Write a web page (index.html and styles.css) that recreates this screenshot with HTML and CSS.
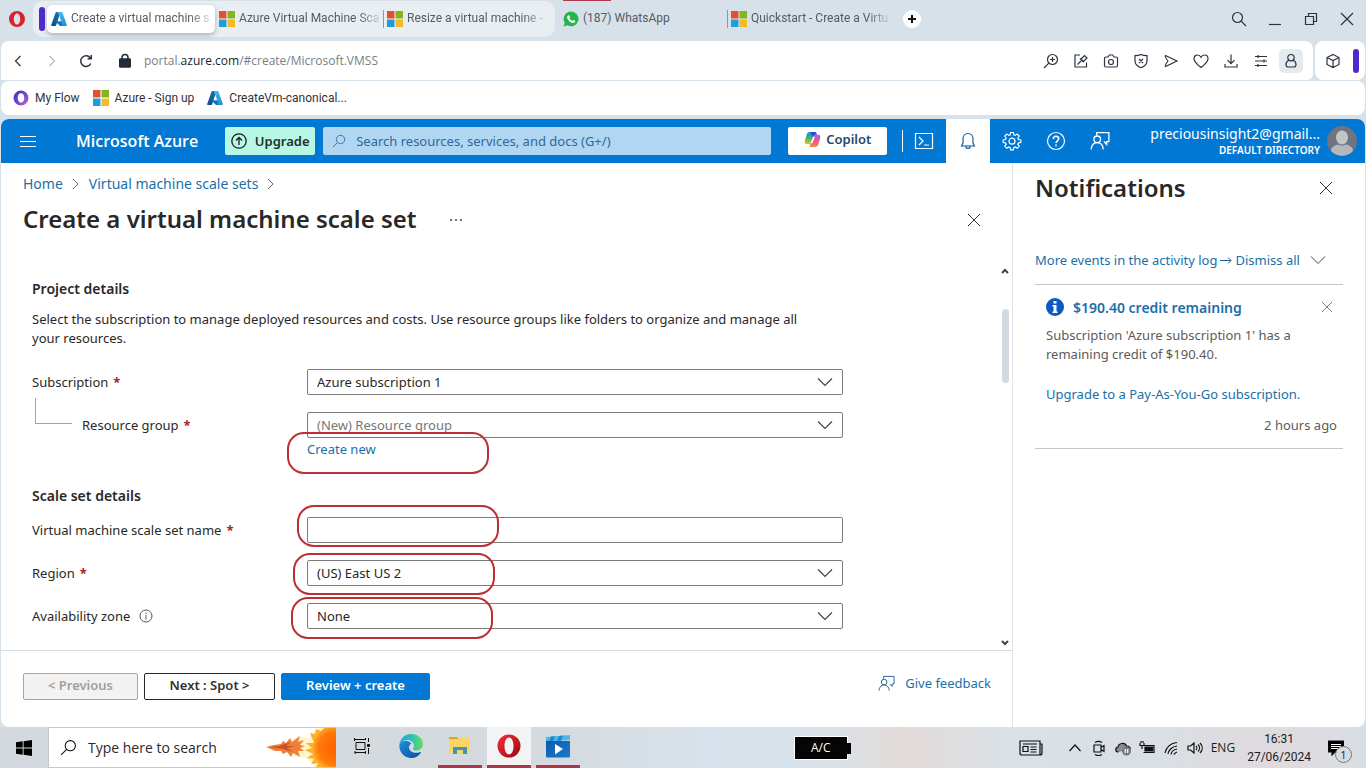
FILE: index.html
```
<!DOCTYPE html>
<html lang="en">
<head>
    <meta charset="UTF-8">
    <meta name="viewport" content="width=device-width, initial-scale=1.0">
    <title>Create a virtual machine scale set - Microsoft Azure</title>
    <link rel="stylesheet" href="styles.css">
</head>
<body>
    <!-- shared icons -->
    <svg class="sprite" width="0" height="0" aria-hidden="true">
        <defs>
            <linearGradient id="azLeft" x1="0" y1="0" x2="0" y2="1"><stop offset="0" stop-color="#1a6fb5"/><stop offset="1" stop-color="#0b4f8f"/></linearGradient>
            <linearGradient id="azRight" x1="0" y1="0" x2="1" y2="1"><stop offset="0" stop-color="#4fc3ee"/><stop offset="1" stop-color="#1e88d2"/></linearGradient>
            <linearGradient id="flow" x1="0" y1="0" x2="1" y2="1"><stop offset="0" stop-color="#3a2bc0"/><stop offset="0.6" stop-color="#7b4bd0"/><stop offset="1" stop-color="#e06ab8"/></linearGradient>
            <linearGradient id="operaRed" x1="0" y1="0" x2="1" y2="1"><stop offset="0" stop-color="#f0303c"/><stop offset="0.6" stop-color="#c81420"/><stop offset="1" stop-color="#8c0a14"/></linearGradient>
            <linearGradient id="edgeTop" x1="0" y1="0" x2="1" y2="0"><stop offset="0" stop-color="#1fa2e0"/><stop offset="0.5" stop-color="#2bbfc0"/><stop offset="1" stop-color="#6bdc5a"/></linearGradient>
            <linearGradient id="edgeLow" x1="0" y1="0" x2="1" y2="1"><stop offset="0" stop-color="#1b8fdc"/><stop offset="1" stop-color="#0c4f9c"/></linearGradient>
            <linearGradient id="cpA" x1="0" y1="0" x2="0" y2="1"><stop offset="0" stop-color="#1d86e8"/><stop offset="0.5" stop-color="#3fb86b"/><stop offset="1" stop-color="#f0c419"/></linearGradient>
            <linearGradient id="cpB" x1="0" y1="0" x2="0" y2="1"><stop offset="0" stop-color="#b05be8"/><stop offset="0.5" stop-color="#e8559a"/><stop offset="1" stop-color="#f58a3c"/></linearGradient>
            <linearGradient id="film" x1="0" y1="0" x2="1" y2="1"><stop offset="0" stop-color="#0d5aa8"/><stop offset="1" stop-color="#1a7ad0"/></linearGradient>
            <radialGradient id="sun"><stop offset="0" stop-color="#ff5f00"/><stop offset="0.75" stop-color="#ff7a08"/><stop offset="1" stop-color="#ffa526"/></radialGradient>
        </defs>
        <symbol id="ms" viewBox="0 0 15 15">
            <path fill="#e2512c" d="M0 0h7v7H0z"/><path fill="#86b41c" d="M8 0h7v7H8z"/>
            <path fill="#1f9ddb" d="M0 8h7v7H0z"/><path fill="#f2b928" d="M8 8h7v7H8z"/>
        </symbol>
        <symbol id="azure" viewBox="0 0 16 16">
            <path fill="url(#azLeft)" d="M5.3 1h4.2L5.2 14.2c-.1.5-.5.8-1 .8H.9c-.5 0-.9-.6-.7-1.1L4.5 1.7c.1-.4.4-.7.8-.7z"/>
            <path fill="#1573bd" d="M11.5 10.2H5.6l-.4 1L9 14.9c.2.1.4.1.6.1h3.3z"/>
            <path fill="url(#azRight)" d="M11.5 1.7c-.1-.4-.5-.7-1-.7H6.2c.5 0 .9.3 1 .7l4.2 12.2c.2.5-.2 1.1-.8 1.1H15c.5 0 .9-.6.8-1.1z"/>
        </symbol>
        <symbol id="chevron-down" viewBox="0 0 16 16"><path d="M1 4.5l7 7 7-7"/></symbol>
        <symbol id="chevron-right" viewBox="0 0 8 14"><path d="M1 2l5 5-5 5"/></symbol>
        <symbol id="close" viewBox="0 0 14 14"><path d="M1 1l12 12M13 1L1 13"/></symbol>
        <symbol id="search" viewBox="0 0 16 16"><circle cx="9.7" cy="6.3" r="4.8"/><path d="M6.3 9.7L1 15"/></symbol>
        <symbol id="feedback" viewBox="0 0 18 18">
            <path d="M6 4V1.500h11v8h-2v2.500l-2.500-2.500"/><circle cx="6.500" cy="7.500" r="3"/><path d="M1 16.500c.4-3.600 2.500-6 5.500-6s5.100 2.400 5.500 6"/>
        </symbol>
    </svg>

    <header class="tabstrip">
        <svg class="opera" viewBox="0 0 18 18"><path fill="#dc2032" fill-rule="evenodd" d="M9 1a8 8 0 100 16A8 8 0 009 1zm0 2.500c1.900 0 3.200 2.400 3.200 5.500S10.900 14.500 9 14.500 5.800 12.100 5.800 9 7.100 3.500 9 3.500z"/></svg>
        <div class="tab-group">
            <span class="island"></span>
            <a class="tab active" href="#"><svg class="fav"><use href="#azure"/></svg><span>Create a virtual machine s</span></a>
            <a class="tab" href="#"><svg class="fav"><use href="#ms"/></svg><span>Azure Virtual Machine Sca</span></a>
            <a class="tab split" href="#"><svg class="fav"><use href="#ms"/></svg><span>Resize a virtual machine -</span></a>
        </div>
        <a class="tab whatsapp" href="#">
            <svg class="fav" viewBox="0 0 15 15"><path fill="#25b548" d="M7.600.5a6.900 6.900 0 11-3.400 12.900L.5 14.500l1.100-3.600A6.900 6.900 0 017.600.5z"/><path fill="#fff" d="M5.300 4c.4 0 .6 0 .8.500l.5 1.200c.1.400-.6.900-.6 1.200.6 1.200 1.500 1.900 2.700 2.400.4 0 .8-1 1.100-.9l1.600.8c.3.300-.2 1.800-1.700 2C7.200 11.200 4 8.200 3.900 6 3.900 4.900 4.600 4 5.300 4z"/></svg>
            <span>(187) WhatsApp</span>
        </a>
        <a class="tab split" href="#"><svg class="fav"><use href="#ms"/></svg><span>Quickstart - Create a Virtu</span></a>
        <button class="new-tab" aria-label="New tab"><svg viewBox="0 0 18 18"><path d="M9 5v8M5 9h8"/></svg></button>
        <div class="window-buttons">
            <button aria-label="Search tabs"><svg viewBox="0 0 16 16"><circle cx="6.500" cy="6.500" r="5"/><path d="M10.200 10.200L15 15"/></svg></button>
            <button aria-label="Minimize"><svg viewBox="0 0 16 16"><path d="M2 13.500h12"/></svg></button>
            <button aria-label="Restore"><svg viewBox="0 0 16 16"><path d="M2.500 5.500h8v8h-8zM5.500 5.500v-3h8v8h-3"/></svg></button>
            <button aria-label="Close"><svg viewBox="0 0 16 16"><path d="M2 2l12 12M14 2L2 14"/></svg></button>
        </div>
    </header>

    <div class="toolbar">
        <div class="address">
            <button aria-label="Back"><svg viewBox="0 0 16 16"><path d="M10.500 3L5.500 8l5 5"/></svg></button>
            <button class="off" aria-label="Forward"><svg viewBox="0 0 16 16"><path d="M5.500 3l5 5-5 5"/></svg></button>
            <button aria-label="Reload"><svg class="reload" viewBox="0 0 16 16"><path d="M12.800 10.500a5.300 5.300 0 11-.3-5.300M13.300 2v3.700H9.600"/></svg></button>
            <svg class="lock" viewBox="0 0 12 16"><path fill="#222c38" d="M1.500 6h9c.6 0 1 .4 1 1v6c0 .6-.4 1-1 1h-9c-.6 0-1-.4-1-1V7c0-.6.400-1 1-1z"/><path d="M3 6V4.500a3 3 0 016 0V6"/></svg>
            <span class="url">portal.<b>azure.com</b>/#create/Microsoft.VMSS</span>
            <div class="tools">
                <button aria-label="Zoom"><svg viewBox="0 0 16 16"><circle cx="9.500" cy="6.500" r="5"/><path d="M5.800 10.200L1 15M9.500 4v5M7 6.500h5"/></svg></button>
                <button aria-label="Pin"><svg viewBox="0 0 16 16"><path d="M7 2H2v12h11.500V9.500M4.500 11.500l3.500-3.500M7 5.500L10.500 9M8 6l3.500-3.500 2.500 2.500-3.500 3.500z"/></svg></button>
                <button aria-label="Snapshot"><svg viewBox="0 0 16 16"><path d="M3 4h2l1.300-2h3.400L11 4h2c.9 0 1.500.6 1.500 1.500v7c0 .9-.6 1.500-1.500 1.500H3c-.9 0-1.500-.6-1.500-1.500v-7C1.500 4.600 2.100 4 3 4z"/><circle cx="8" cy="9" r="2.500"/></svg></button>
                <button aria-label="Ad blocker"><svg viewBox="0 0 16 16"><path d="M8 1.500c2 1 4 1.200 6 1.200v5c0 3.500-2.500 5.800-6 7-3.500-1.200-6-3.500-6-7v-5c2 0 4-.2 6-1.200zM6 6l4 4M10 6l-4 4"/></svg></button>
                <button aria-label="Send"><svg viewBox="0 0 16 16"><path d="M2.500 2.500L14 8 2.500 13.500c-.7-.8.9-3.500 2.500-5.500-1.600-2-3.200-4.700-2.500-5.500z"/></svg></button>
                <button aria-label="Bookmark"><svg viewBox="0 0 16 16"><path d="M8 14.500C3.500 11 1 8.700 1 5.700 1 3.500 2.600 2 4.500 2 6 2 7.300 2.900 8 4.300 8.700 2.900 10 2 11.500 2 13.400 2 15 3.500 15 5.700c0 3-2.500 5.300-7 8.800z"/></svg></button>
                <button aria-label="Downloads"><svg viewBox="0 0 16 16"><path d="M8 1.500v9M4.500 7.200L8 10.700l3.500-3.500M2 11v3h12v-3"/></svg></button>
                <button aria-label="Easy setup"><svg viewBox="0 0 16 16"><path d="M2 3.500h12M2 8h12M2 12.500h12M5 2v3M11 6.500v3M5 11v3"/></svg></button>
                <button class="user" aria-label="Profile"><svg viewBox="0 0 16 16"><circle cx="8" cy="4.700" r="3.200"/><path d="M5.800 7.200C4 8 3 9.500 3 11.500c0 1.700.8 2.500 2 2.500h6c1.200 0 2-.8 2-2.500 0-2-1-3.500-2.800-4.300"/></svg></button>
            </div>
        </div>
        <div class="side-tools">
            <button aria-label="Extensions"><svg viewBox="0 0 16 16"><path d="M8 1.500l6 3v7l-6 3-6-3v-7zM2 4.500l6 3 6-3M8 7.500v7"/></svg></button>
            <span class="island"></span>
        </div>
    </div>

    <nav class="bookmarks">
        <a href="#"><svg class="fav" viewBox="0 0 16 16"><path fill="url(#flow)" fill-rule="evenodd" d="M8 .5a7.500 7.500 0 100 15 7.500 7.500 0 000-15zm0 2.800c2 0 3.300 2 3.300 4.700S10 12.700 8 12.700 4.700 10.700 4.700 8 6 3.300 8 3.300z"/></svg>My Flow</a>
        <a href="#"><svg class="fav"><use href="#ms"/></svg>Azure - Sign up</a>
        <a href="#"><svg class="fav"><use href="#azure"/></svg>CreateVm-canonical...</a>
    </nav>

    <div class="portal">
        <header class="topbar">
            <button class="menu" aria-label="Menu"><svg viewBox="0 0 16 16"><path d="M0 3.500h16M0 8.500h16M0 13.500h16"/></svg></button>
            <a class="brand" href="#">Microsoft Azure</a>
            <button class="upgrade"><svg viewBox="0 0 16 16"><circle cx="8" cy="8" r="7.200"/><path d="M8 12V4.500M5 7.500l3-3 3 3"/></svg>Upgrade</button>
            <div class="search"><svg><use href="#search"/></svg><input type="text" aria-label="Search" placeholder="Search resources, services, and docs (G+/)"></div>
            <button class="copilot"><svg viewBox="0 0 16 16"><path fill="url(#cpA)" d="M5.300 1h5.400L7.800 10.500c-.5 1.500-1.200 2-2.300 2H2.700C1 12.500.2 11 .8 9l1.700-5.500C3 1.800 4 1 5.300 1z"/><path fill="url(#cpB)" d="M10.700 15H5.300l2.900-9.500c.5-1.500 1.200-2 2.300-2h2.800c1.700 0 2.500 1.500 1.900 3.500l-1.700 5.500c-.5 1.700-1.500 2.500-2.800 2.500z"/><path fill="#1654c4" d="M6 1h4.300c1 0 1.500.8 1.900 2.500h-1.700c-1.100 0-1.800.5-2.300 2z"/><path fill="#fff" d="M8.600 5.500h1.800l-2.600 6H6z"/></svg>Copilot</button>
            <div class="top-icons">
                <button aria-label="Cloud Shell"><svg viewBox="0 0 20 20"><path d="M1.500 2.500h17v15h-17zM5 6l4 4-4 4M10 14h5"/></svg></button>
                <button class="on" aria-label="Notifications"><svg viewBox="0 0 20 20"><path d="M3.500 15h13L15 12V8c0-3-2-5.500-5-5.500S5 5 5 8v4zM8 15.500a2 2 0 004 0"/></svg></button>
                <button aria-label="Settings"><svg viewBox="0 0 20 20"><path d="M8.600 1.500h2.800l.4 2.300 1.500.6 1.900-1.300 2 2-1.300 1.900.6 1.500 2.300.4v2.600l-2.300.4-.6 1.500 1.300 1.900-2 2-1.900-1.300-1.500.6-.4 2.300H8.600l-.4-2.300-1.500-.6-1.900 1.300-2-2 1.300-1.900-.6-1.500-2.300-.4V8.900l2.300-.4.6-1.500-1.300-1.900 2-2 1.900 1.300 1.500-.6z"/><circle cx="10" cy="10.200" r="3"/></svg></button>
                <button aria-label="Help"><svg viewBox="0 0 20 20"><circle cx="10" cy="10" r="8.500"/><path class="thick" d="M7.300 8c0-1.700 1.200-2.700 2.700-2.700s2.700 1 2.700 2.500c0 2-2.700 2-2.700 4.200M10 13.500v1.700"/></svg></button>
                <button aria-label="Feedback"><svg><use href="#feedback"/></svg></button>
            </div>
            <button class="account">
                <span class="who"><span class="mail">preciousinsight2@gmail...</span><span class="dir">DEFAULT DIRECTORY</span></span>
                <svg viewBox="0 0 30 30"><circle cx="15" cy="15" r="15" fill="#6f7480"/><ellipse cx="15" cy="11.500" rx="6" ry="7" fill="#c3c5c9"/><path fill="#b4b7bc" d="M4 25c0-4 4-6 7-6.500 2.500 1.500 5.500 1.500 8 0 3 .5 7 2.500 7 6.500a15 15 0 01-22 0z"/></svg>
            </button>
        </header>

        <div class="portal-body">
            <main class="blade">
                <nav class="crumbs">
                    <a href="#">Home</a><svg><use href="#chevron-right"/></svg>
                    <a href="#">Virtual machine scale sets</a><svg><use href="#chevron-right"/></svg>
                </nav>
                <div class="title-row">
                    <h1>Create a virtual machine scale set</h1>
                    <button class="more" aria-label="More"><svg viewBox="0 0 14 4"><circle cx="2" cy="2" r="1"/><circle cx="7" cy="2" r="1"/><circle cx="12" cy="2" r="1"/></svg></button>
                    <button class="close" aria-label="Close"><svg><use href="#close"/></svg></button>
                </div>

                <div class="scroll-area">
                    <form class="form" id="vmss" action="#">
                        <h2>Project details</h2>
                        <p>Select the subscription to manage deployed resources and costs. Use resource groups like folders to organize and manage all your resources.</p>
                        <div class="row">
                            <label for="subscription">Subscription <i>*</i></label>
                            <div class="field">
                                <select id="subscription"><option>Azure subscription 1</option></select>
                                <svg><use href="#chevron-down"/></svg>
                            </div>
                        </div>
                        <div class="row nested">
                            <label for="group">Resource group <i>*</i></label>
                            <div class="field">
                                <select id="group" class="hint"><option>(New) Resource group</option></select>
                                <svg><use href="#chevron-down"/></svg>
                                <span class="mark mark-create"></span>
                            </div>
                        </div>
                        <a class="create" href="#">Create new</a>

                        <h2>Scale set details</h2>
                        <div class="row">
                            <label for="name">Virtual machine scale set name <i>*</i></label>
                            <div class="field">
                                <input type="text" id="name">
                                <span class="mark mark-name"></span>
                            </div>
                        </div>
                        <div class="row">
                            <label for="region">Region <i>*</i></label>
                            <div class="field">
                                <select id="region"><option>(US) East US 2</option></select>
                                <svg><use href="#chevron-down"/></svg>
                                <span class="mark mark-region"></span>
                            </div>
                        </div>
                        <div class="row">
                            <label for="zone">Availability zone <svg class="info" viewBox="0 0 14 14"><circle cx="7" cy="7" r="6"/><path d="M7 6v4.500M7 3.500V5"/></svg></label>
                            <div class="field">
                                <select id="zone"><option>None</option></select>
                                <svg><use href="#chevron-down"/></svg>
                                <span class="mark mark-zone"></span>
                            </div>
                        </div>
                    </form>
                    <div class="scrollbar">
                        <svg viewBox="0 0 8 6"><path d="M1 5l3-3 3 3"/></svg>
                        <span class="thumb"></span>
                        <svg viewBox="0 0 8 6"><path d="M1 1l3 3 3-3"/></svg>
                    </div>
                </div>

                <footer class="actions">
                    <button class="btn" disabled>&lt; Previous</button>
                    <button class="btn next">Next : Spot &gt;</button>
                    <button class="btn primary">Review + create</button>
                    <a class="give" href="#"><svg><use href="#feedback"/></svg>Give feedback</a>
                </footer>
            </main>

            <aside class="notices">
                <div class="notices-head">
                    <h2>Notifications</h2>
                    <button aria-label="Close"><svg><use href="#close"/></svg></button>
                </div>
                <div class="notices-links">
                    <a href="#">More events in the activity log</a>
                    <svg class="arrow" viewBox="0 0 12 12"><path d="M0 6.500h11M8 3.500l3 3-3 3"/></svg>
                    <a href="#">Dismiss all</a>
                    <svg class="down"><use href="#chevron-down"/></svg>
                </div>
                <article class="notice">
                    <header>
                        <svg class="badge" viewBox="0 0 18 18"><circle cx="9" cy="9" r="9" fill="#0f58bd"/><path fill="#fff" d="M7.500 3h3v2.500h-3zM6.500 7h4v6.500h1V15h-5v-1.500h1v-5h-1z"/></svg>
                        <a href="#">$190.40 credit remaining</a>
                        <button aria-label="Dismiss"><svg><use href="#close"/></svg></button>
                    </header>
                    <p>Subscription 'Azure subscription 1' has a remaining credit of $190.40.</p>
                    <a href="#">Upgrade to a Pay-As-You-Go subscription.</a>
                    <time>2 hours ago</time>
                </article>
            </aside>
        </div>
    </div>

    <footer class="taskbar">
        <button class="start" aria-label="Start"><svg viewBox="0 0 16 16"><path d="M0 2.300L6.700 1.300v6.200H0zM7.600 1.200L16 0v7.500H7.600zM0 8.400h6.700v6.300L0 13.700zM7.600 8.400H16V16l-8.400-1.200z"/></svg></button>
        <label class="task-search">
            <svg><use href="#search"/></svg>
            <input type="text" placeholder="Type here to search">
            <svg class="art" viewBox="0 0 70 39"><path fill="#ffe98c" opacity=".5" d="M18 19L32 8l10 3 10-11h18v39H50L40 30l-10-2z"/><path fill="#ffb02a" d="M44 5l5 1 1-5 5 2 3-3h12v39H50l2-4-7 1 3-5-7-1 6-4-8-4 7-2-6-5 8 0z"/><circle cx="69" cy="20" r="22" fill="url(#sun)"/><path fill="#f08038" d="M0 19l8-2 7-1 2-3 3 2 4-5 2 4 8-6-2 6 6-2-4 5 5 1-5 2 4 3-6 0 2 6-7-4-2 4-4-5-4 2-2-3-6 0z"/><path fill="#c8502c" d="M3 19l10-1 12-4-5 4h9l-8 2 6 4-10-3z"/></svg>
        </label>
        <div class="apps">
            <button class="app" aria-label="Task view"><svg viewBox="0 0 20 20" class="line"><path d="M4 6.500h9v7H4zM2.500 2v3M13.500 2v2M3 3.500h10M3 16.500h10M3 15v3M13.500 15v3M16.500 2v4M16.500 12v6"/><path d="M15.500 8.500h2v2h-2z" fill="#111"/></svg></button>
            <button class="app" aria-label="Edge"><svg viewBox="0 0 24 24"><path fill="url(#edgeLow)" d="M.3 11C0 18 5 24 12.500 24c4 0 7.500-2 9.500-5.500.2-.4-.2-.7-.6-.5-5 2-11 .5-11.400-4.500-.2-2 1-3.500 2.500-3.800C9 5 2 6 .3 11z"/><path fill="url(#edgeTop)" d="M.3 11C1 4.500 6 0 12 0c7 0 12 4.500 12 10 0 4-3 6.500-6.500 6.500-2.500 0-4-1-3.500-2 .3-.6 1-1.200 1-2.800C15 8.500 12 6 8 6 4 6 1.500 8 .3 11z"/></svg></button>
            <button class="app open" aria-label="File Explorer"><svg viewBox="0 0 24 24"><path fill="#e0a528" d="M1 3h8l2 2.500H1z"/><path fill="#fbd566" d="M1 5.500h8l2-2h11V20H1z"/><path fill="#4793b5" d="M5 20v-7h14v7h-4v-4H9v4z"/></svg></button>
            <button class="app open current" aria-label="Opera"><svg viewBox="0 0 24 24"><path fill="url(#operaRed)" fill-rule="evenodd" d="M12 .5a11.500 11.500 0 100 23 11.500 11.500 0 000-23zm0 3c2.900 0 4.500 3.800 4.500 8.500s-1.600 8.500-4.500 8.500S7.500 16.700 7.500 12 9.100 3.500 12 3.500z"/></svg></button>
            <button class="app open" aria-label="Movies"><svg viewBox="0 0 24 24"><path fill="#49b8ea" d="M0 3l24-2v5L0 8z"/><path fill="#1f86cf" d="M5 2.600l4-.4-2 5-4 .3zM13 1.900l4-.3-2 5-4 .4z"/><path fill="url(#film)" d="M0 7h24v15c0 1-.5 1.500-1.500 1.500h-21C.5 23.500 0 23 0 22z"/><path fill="#fff" d="M9 10l8 5-8 5.500z"/></svg></button>
        </div>
        <div class="battery">A/C</div>
        <div class="tray">
            <svg class="news" viewBox="0 0 24 16"><path d="M1 1h20v14H3c-1.500 0-2-.5-2-2zM21 4h2v9c0 1.500-1 2-2 2M4 6.500h5v5H4zM4 4h14M11.500 7h6M11.500 9.500h6M11.500 12h6"/></svg>
            <svg viewBox="0 0 16 16"><path d="M2.500 11L8 5l5.500 6"/></svg>
            <svg viewBox="0 0 16 16"><path d="M3 5h7v7H3zM10 7.500l3-2v6l-3-2M4 2.500c2-1.300 5-1.300 7 0M4 14.500c2 1.300 5 1.300 7 0"/></svg>
            <svg viewBox="0 0 16 16"><path fill="#8a8c8f" d="M3.500 12C0 12 0 7.500 3 7c.5-4 7-5 8.500-1 3 0 4 2 3.500 3.500"/><circle cx="11.500" cy="11" r="4.500" fill="#777a7d" stroke="none"/><path stroke="#fff" d="M10.300 9v4M12.700 9v4"/></svg>
            <svg viewBox="0 0 16 16"><path d="M5.500 5.500H15v7H4.500M1 3v2.500h4V3M2 3V1M4 3V1M3 5.500V9"/><path fill="#111" d="M6 7h7.500v4H6z"/></svg>
            <svg viewBox="0 0 16 16"><path d="M2 13C3 7.500 7.500 3 14 2.500M5 14c.500-4 4-7.500 9-8M8 14.500c.500-2.500 2.500-5 6-5.500M11 14.500c.500-1.500 1.500-2 3-2.500"/></svg>
            <svg viewBox="0 0 16 16"><path d="M1 6h2.500L7 3v10L3.500 10H1zM9 6c1 1 1 3 0 4M11 4.500c2 2 2 5 0 7M13 3c3 3 3 7 0 10"/></svg>
            <span class="lang">ENG</span>
            <div class="clock"><time>16:31</time><span>27/06/2024</span></div>
            <button class="action-center" aria-label="Notifications">
                <svg viewBox="0 0 16 16"><path fill="#000" d="M0 1h16v11H7l-3 3v-3H0z"/><path stroke="#fff" d="M3 4.500h10M3 6.500h10M3 8.500h7"/></svg>
                <span>1</span>
            </button>
        </div>
    </footer>
</body>
</html>
```
FILE: styles.css
```
* {
    box-sizing: border-box;
}
body {
    display: flex;
    flex-direction: column;
    min-height: 100vh;
    margin: 0;
    background-color: #d7e1e9;
    color: #292827;
    font-family: "Noto Sans", "Open Sans", sans-serif;
    font-size: 13px;
    line-height: 19px;
}
button {
    display: flex;
    align-items: center;
    justify-content: center;
    padding: 0;
    border: none;
    background: none;
    color: inherit;
    font: inherit;
    cursor: pointer;
}
a {
    color: #1a6fa8;
    text-decoration: none;
}
svg {
    flex: none;
    fill: none;
    stroke: none;
}
.sprite {
    position: absolute;
}
.fav {
    width: 16px;
    height: 16px;
}

/* browser tabs */
.tabstrip {
    display: flex;
    align-items: center;
    height: 41px;
    padding: 0 11px 4px 8px;
    font-family: Roboto, sans-serif;
    font-size: 12px;
}
.opera {
    width: 18px;
    height: 18px;
    margin-right: 7px;
}
.tab-group {
    display: flex;
    align-items: center;
    height: 36px;
    padding: 0 4px 0 6px;
    border-radius: 10px;
    background-color: #e9eef2;
}
.island {
    width: 6px;
    height: 24px;
    border-radius: 3px;
    background-color: #4f2acb;
}
.tab {
    display: flex;
    align-items: center;
    gap: 4px;
    width: 168px;
    height: 28px;
    padding-left: 4px;
    color: #555c63;
}
.tab span {
    overflow: hidden;
    white-space: nowrap;
}
.tab:not(.whatsapp) span {
    mask-image: linear-gradient(to right, #000 85%, rgba(0, 0, 0, 0.2));
}
.tab.active {
    margin-left: 2px;
    border-radius: 5px;
    background-color: #fff;
    box-shadow: 0 2px 5px rgba(40, 60, 80, 0.35);
}
.tab.split {
    height: 18px;
    padding-left: 3px;
    border-left: 1px solid #8f989f;
}
.whatsapp {
    position: relative;
    margin-left: 4px;
}
.whatsapp::before {
    content: "";
    position: absolute;
    top: -5px;
    left: 4px;
    width: 48px;
    height: 1px;
    background-color: #b03a4c;
}
.new-tab {
    width: 18px;
    height: 18px;
    margin-left: 8px;
    border-radius: 50%;
    background-color: #fff;
}
.new-tab svg {
    width: 18px;
    stroke: #111;
    stroke-width: 2;
}
.window-buttons {
    display: flex;
    gap: 20px;
    margin-left: auto;
}
.window-buttons svg,
.toolbar button svg {
    width: 16px;
    height: 16px;
    stroke: #2b3440;
    stroke-width: 1.2;
}

/* address bar */
.toolbar {
    display: flex;
    gap: 2px;
    height: 39px;
    margin: 0 1px 1px;
    font-family: "Open Sans", sans-serif;
    font-size: 12px;
}
.address,
.side-tools {
    display: flex;
    align-items: center;
    border-radius: 8px 8px 6px 0;
    background-color: #fff;
}
.address {
    flex: 1;
    gap: 18px;
    padding: 0 10px 0 9px;
}
.address .off svg {
    stroke: #b5bac0;
}
.toolbar .reload {
    stroke-width: 1.500;
}
.lock {
    width: 12px;
    height: 16px;
    margin-left: 7px;
    stroke: #222c38;
    stroke-width: 1.500;
}
.url {
    margin-left: -5px;
    color: #76808a;
}
.url b {
    color: #1b1f24;
    font-weight: normal;
}
.tools {
    display: flex;
    align-items: center;
    gap: 6px;
    margin-left: auto;
}
.tools button {
    width: 24px;
    height: 24px;
}
.tools .user {
    border-radius: 5px;
    background-color: #e4eaee;
}
.side-tools {
    gap: 12px;
    padding: 0 6px 0 10px;
    border-radius: 8px;
}

/* bookmarks */
.bookmarks {
    display: flex;
    align-items: center;
    gap: 13px;
    height: 34px;
    margin: 0 1px 4px;
    padding: 0 12px;
    border-radius: 8px;
    background-color: #fff;
    font-family: Roboto, sans-serif;
    font-size: 12px;
}
.bookmarks a {
    display: flex;
    align-items: center;
    gap: 6px;
    color: #2f3237;
}

/* portal */
.portal {
    display: flex;
    flex: 1;
    flex-direction: column;
    margin: 0 1px;
    overflow: hidden;
    border-radius: 8px;
    background-color: #fff;
}
.topbar {
    display: flex;
    align-items: center;
    height: 44px;
    padding: 0 8px 0 19px;
    background-color: #0078d4;
    color: #fff;
}
.menu svg {
    width: 16px;
    height: 16px;
    stroke: #fff;
}
.brand {
    margin: 0 27px 0 40px;
    color: #fff;
    font-family: "Open Sans", sans-serif;
    font-size: 16px;
    font-weight: 600;
    white-space: nowrap;
}
.upgrade {
    gap: 8px;
    width: 90px;
    height: 28px;
    border-radius: 2px;
    background-color: #b7f7e4;
    color: #22302c;
    font-weight: 600;
}
.upgrade svg {
    width: 16px;
    height: 16px;
    stroke: #1b1b1b;
    stroke-width: 1.300;
}
.search {
    display: flex;
    flex: 1;
    align-items: center;
    gap: 10px;
    height: 28px;
    margin: 0 17px 0 8px;
    padding: 0 9px;
    border-radius: 2px;
    background-color: #b1d6f2;
}
.search svg {
    width: 14px;
    height: 14px;
    stroke: #2b6a9c;
}
.search input,
.task-search input {
    flex: 1;
    min-width: 0;
    padding: 0;
    border: none;
    outline: none;
    background: none;
    font: inherit;
}
.search input::placeholder {
    color: #2f689a;
    opacity: 1;
}
.copilot {
    gap: 5px;
    width: 99px;
    height: 28px;
    padding-bottom: 3px;
    border-radius: 2px;
    background-color: #fff;
    color: #24476b;
    font-weight: 600;
}
.copilot svg {
    width: 17px;
    height: 17px;
}
.top-icons {
    display: flex;
    align-items: center;
    align-self: stretch;
    margin-left: 15px;
    background: linear-gradient(#fff, #fff) 0 11px / 1px 22px no-repeat;
}
.top-icons button {
    width: 44px;
    height: 44px;
}
.top-icons svg {
    width: 20px;
    height: 20px;
    stroke: #fff;
    stroke-width: 1.200;
}
.top-icons .thick {
    stroke-width: 1.600;
}
.top-icons .on {
    background-color: #fff;
}
.top-icons .on svg {
    stroke: #0f5f9f;
}
.account {
    gap: 7px;
    margin-left: 28px;
}
.who {
    display: flex;
    flex-direction: column;
    align-items: flex-end;
}
.mail {
    font-size: 14px;
    line-height: 18px;
}
.dir {
    font-size: 10px;
    font-weight: 600;
    line-height: 14px;
}
.account svg {
    width: 30px;
    height: 30px;
}
.portal-body {
    display: flex;
    flex: 1;
}

/* create blade */
.blade {
    display: flex;
    flex: 1;
    flex-direction: column;
    min-width: 0;
}
.crumbs {
    display: flex;
    align-items: center;
    gap: 9px;
    padding: 11px 22px 0;
    font-size: 14px;
    line-height: 20px;
}
.crumbs svg {
    width: 8px;
    height: 14px;
    stroke: #6b6b6b;
}
.title-row {
    display: flex;
    align-items: center;
    height: 52px;
    padding: 0 31px 0 22px;
}
h1,
.notices h2 {
    margin: 0;
    font-size: 24px;
    font-weight: 600;
    line-height: 32px;
}
h1 {
    padding-bottom: 2px;
}
.more {
    margin-left: 32px;
}
.more svg {
    width: 14px;
    height: 4px;
    fill: #444;
}
.close {
    margin-left: auto;
}
.close svg,
.notices-head svg {
    width: 14px;
    height: 14px;
    stroke: #333;
}
.scroll-area {
    display: flex;
    flex: 1;
    justify-content: space-between;
    padding: 19px 2px 0 31px;
}
.form {
    flex: 1;
    max-width: 811px;
    padding-top: 14px;
}
.form h2 {
    margin: 0 0 11px;
    font-size: 14px;
    font-weight: 600;
    line-height: 20px;
}
.form p {
    margin: 0 0 21px;
    padding-right: 20px;
}
.row {
    display: flex;
    margin-bottom: 17px;
}
.row label {
    display: flex;
    align-items: center;
    gap: 5px;
    width: 275px;
}
.row i {
    color: #a4262c;
    font-style: normal;
    font-weight: bold;
}
.nested {
    margin-bottom: 1px;
}
.nested label {
    position: relative;
    padding-left: 50px;
}
.nested label::before {
    content: "";
    position: absolute;
    top: -14px;
    left: 3px;
    width: 36px;
    height: 25px;
    border: solid #a5a3a1;
    border-width: 0 0 1px 1px;
}
.field {
    position: relative;
    flex: 1;
}
.field select,
.field input {
    display: block;
    width: 100%;
    height: 26px;
    padding: 0 9px;
    border: 1px solid #7d7b79;
    border-radius: 2px;
    background-color: #fff;
    color: inherit;
    font: inherit;
    appearance: none;
}
.field .hint {
    color: #797775;
}
.field svg {
    position: absolute;
    top: 5px;
    right: 10px;
    width: 16px;
    height: 16px;
    stroke: #444;
    stroke-width: 1.200;
    pointer-events: none;
}
.info {
    width: 14px;
    height: 14px;
    margin-left: 4px;
    stroke: #555;
}
.create {
    display: block;
    width: max-content;
    margin: 0 0 27px 275px;
    line-height: 20px;
}

/* red highlights drawn over the fields */
.mark {
    position: absolute;
    z-index: 1;
    width: 202px;
    height: 42px;
    border: 2px solid #bc2f33;
    border-radius: 17px;
    pointer-events: none;
}
.mark-create {
    top: 20px;
    left: -20px;
}
.mark-name {
    top: -12px;
    left: -10px;
}
.mark-region {
    top: -7px;
    left: -14px;
}
.mark-zone {
    top: -6px;
    left: -16px;
}
.scrollbar {
    display: flex;
    flex-direction: column;
    align-items: center;
    width: 10px;
    padding: 3px 0 4px;
}
.scrollbar svg {
    width: 8px;
    height: 6px;
    stroke: #444;
    stroke-width: 2;
}
.thumb {
    width: 7px;
    height: 74px;
    margin: 35px 0 auto;
    border-radius: 4px;
    background-color: #d2dbe3;
}
.actions {
    display: flex;
    align-items: center;
    gap: 6px;
    height: 77px;
    padding: 0 21px 6px 22px;
    border-top: 1px solid #d9dcde;
}
.btn {
    min-width: 115px;
    height: 27px;
    padding-bottom: 2px;
    border: 1px solid #a8a6a4;
    border-radius: 2px;
    background-color: #f3f2f1;
    color: #a19f9d;
    font-weight: 600;
}
.next {
    min-width: 131px;
    border-color: #292827;
    background-color: #fff;
    color: #323130;
}
.primary {
    min-width: 149px;
    border-color: #0078d4;
    background-color: #0078d4;
    color: #fff;
}
.give {
    display: flex;
    align-items: center;
    gap: 10px;
    margin-left: auto;
    padding-bottom: 6px;
}
.give svg {
    width: 17px;
    height: 17px;
    stroke: #1f5f99;
}

/* notifications */
.notices {
    width: 353px;
    padding: 9px 22px 0;
    border-left: 1px solid #e3e3e3;
}
.notices-head {
    display: flex;
    align-items: center;
    justify-content: space-between;
    padding-right: 10px;
}
.notices-links {
    display: flex;
    align-items: center;
    height: 81px;
    padding-top: 32px;
    border-bottom: 1px solid #c8c6c4;
    white-space: nowrap;
}
.arrow {
    width: 12px;
    height: 12px;
    margin: 0 3px;
    stroke: #1a5f90;
}
.down {
    width: 16px;
    height: 16px;
    margin-left: 10px;
    stroke: #444;
}
.notice {
    padding: 11px 6px 13px 11px;
    border-bottom: 1px solid #c8c6c4;
    color: #5d5b59;
}
.notice header {
    display: flex;
    align-items: center;
    gap: 9px;
    height: 22px;
}
.notice header a {
    flex: 1;
    font-size: 14px;
    font-weight: 600;
}
.badge {
    width: 18px;
    height: 18px;
}
.notice button {
    margin-right: 4px;
}
.notice button svg {
    width: 12px;
    height: 12px;
    stroke: #666;
}
.notice p {
    margin: 8px 0 21px;
}
.notice time {
    display: block;
    margin-top: 12px;
    text-align: right;
}

/* windows taskbar */
.taskbar {
    display: flex;
    align-items: center;
    height: 41px;
    background: linear-gradient(to right, #d3d9de 0, #d5dade 40%, #d8e2ec 52%, #d9e2ea 60%, #e2dad8 66%, #dae1e7 74%, #d9dfe4 85%, #e0dadd 93%, #d8dfe5 100%);
    color: #1c1c1c;
    font-family: "Open Sans", sans-serif;
    font-size: 12px;
}
.start {
    width: 48px;
    height: 41px;
}
.start svg {
    width: 16px;
    height: 16px;
    fill: #000;
}
.task-search {
    display: flex;
    align-items: center;
    gap: 11px;
    width: 288px;
    height: 41px;
    padding-left: 11px;
    border: 1px solid #c4c9cd;
    border-right: none;
    background-color: #fff;
    font-size: 14px;
}
.task-search svg {
    width: 17px;
    height: 17px;
    stroke: #111;
}
.task-search .art {
    width: 70px;
    height: 39px;
    stroke: none;
}
.task-search input::placeholder {
    color: #2a2a2a;
    opacity: 1;
}
.apps {
    display: flex;
    gap: 5px;
    margin-left: 4px;
}
.app {
    width: 44px;
    height: 41px;
    border-bottom: 3px solid transparent;
}
.app svg {
    width: 24px;
    height: 24px;
}
.app .line {
    width: 20px;
    stroke: #111;
}
.open {
    border-color: #b03348;
}
.current {
    background-color: #f2f3f5;
}
.battery {
    position: relative;
    width: 54px;
    height: 24px;
    margin-left: auto;
    border: 1px solid #fff;
    background-color: #050505;
    color: #fff;
    line-height: 22px;
    text-align: center;
}
.battery::after {
    content: "";
    position: absolute;
    top: 6px;
    left: 52px;
    width: 4px;
    height: 11px;
    background-color: #050505;
}
.tray {
    display: flex;
    align-items: center;
    gap: 8px;
    margin-left: 171px;
    padding-right: 22px;
}
.tray svg {
    width: 16px;
    height: 16px;
    stroke: #111;
    stroke-width: 1.200;
}
.tray .news {
    width: 24px;
    margin-right: 16px;
}
.clock {
    display: flex;
    flex-direction: column;
    align-items: center;
    margin: 0 9px 0 4px;
    font-family: Roboto, sans-serif;
    line-height: 18px;
}
.action-center {
    position: relative;
}
.action-center span {
    position: absolute;
    top: 6px;
    left: 7px;
    width: 17px;
    height: 17px;
    border: 1px solid #777;
    border-radius: 50%;
    background-color: #d9dcdf;
    font-size: 11px;
    line-height: 15px;
}
```
